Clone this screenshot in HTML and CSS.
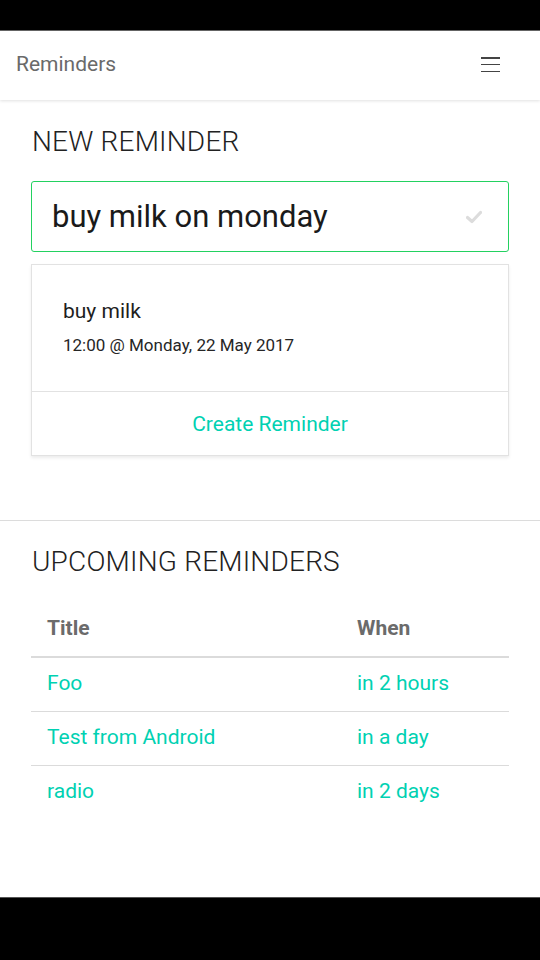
FILE: index.html
```html
<!DOCTYPE html>
<html>
<head>
<meta charset="utf-8">
<link rel="stylesheet" href="styles.css">
</head>
<body>
<div class="screen">
  <div class="statusbar"></div>
  <header class="navbar">
    <span class="brand">Reminders</span>
    <span class="burger"><i></i><i></i><i></i></span>
  </header>
  <main class="content">
    <section class="section new">
      <h2 class="heading">NEW REMINDER</h2>
      <div class="field">
        <span class="field-text">buy milk on monday</span>
        <svg class="check" width="16" height="14" viewBox="0 0 16 14"><path d="M1.5 7.5 L6 11.5 L14.5 2.5" fill="none" stroke="#dcdcdc" stroke-width="3.2" stroke-linejoin="round" stroke-linecap="round"/></svg>
      </div>
      <div class="card">
        <div class="card-body">
          <div class="card-title">buy milk</div>
          <div class="card-sub">12:00 @ Monday, 22 May 2017</div>
        </div>
        <div class="card-foot">Create Reminder</div>
      </div>
    </section>
    <hr class="rule">
    <section class="section upcoming">
      <h2 class="heading">UPCOMING REMINDERS</h2>
      <table class="table">
        <thead>
          <tr><th class="col-title">Title</th><th>When</th></tr>
        </thead>
        <tbody>
          <tr><td>Foo</td><td>in 2 hours</td></tr>
          <tr><td>Test from Android</td><td>in a day</td></tr>
          <tr><td>radio</td><td>in 2 days</td></tr>
        </tbody>
      </table>
    </section>
  </main>
  <div class="navbar-bottom"></div>
</div>
</body>
</html>
```
FILE: styles.css
```css
* { box-sizing: border-box; }
html, body { margin: 0; padding: 0; }
body {
  font-family: Roboto, "Noto Sans", Arial, sans-serif;
  background: #fff;
  color: #222;
}
.screen {
  width: 540px;
  height: 960px;
  display: flex;
  flex-direction: column;
  overflow: hidden;
}
.statusbar {
  height: 31px;
  background: #000;
  border-bottom: 1px solid #666;
  flex: none;
}
.navbar {
  height: 69px;
  flex: none;
  display: flex;
  align-items: center;
  justify-content: space-between;
  padding: 0 40px 3px 16px;
  box-shadow: 0 1px 3px rgba(0,0,0,0.12);
  position: relative;
  z-index: 1;
}
.brand {
  font-size: 21px;
  color: #6a6a6a;
  font-weight: 400;
}
.burger {
  width: 19px;
  height: 15px;
  margin-top: 1px;
  display: flex;
  flex-direction: column;
  justify-content: space-between;
}
.burger i {
  display: block;
  height: 1.5px;
  background: #444;
}
.content { flex: 1; }
.section { padding: 25px 31px 0 31px; }
.heading {
  margin: 0;
  font-size: 28px;
  line-height: 34px;
  font-weight: 300;
  letter-spacing: 0.2px;
  color: #222;
  padding-left: 1px;
}
.field {
  margin-top: 22px;
  height: 71px;
  border: 1px solid #23d160;
  border-radius: 3px;
  display: flex;
  align-items: center;
  justify-content: space-between;
  padding: 0 26px 0 20px;
}
.field-text {
  font-size: 31px;
  color: #1a1a1a;
}
.card {
  margin-top: 12px;
  border: 1px solid #e2e2e2;
  box-shadow: 0 2px 3px rgba(10,10,10,0.08);
}
.card-body {
  height: 126px;
  padding: 33px 31px 0 31px;
}
.card-title {
  font-size: 21px;
  line-height: 26px;
  color: #1e1e1e;
}
.card-sub {
  margin-top: 11px;
  font-size: 17px;
  line-height: 20px;
  color: #262626;
}
.card-foot {
  height: 64px;
  border-top: 1px solid #e2e2e2;
  display: flex;
  align-items: center;
  justify-content: center;
  font-size: 21px;
  color: #00d1b2;
}
.rule {
  margin: 64px 0 0 0;
  border: 0;
  height: 1px;
  background: #dcdcdc;
}
.upcoming { padding-top: 24px; }
.table {
  margin-top: 22px;
  width: 100%;
  border-collapse: collapse;
  font-size: 21px;
}
.table th, .table td {
  text-align: left;
  padding: 0 16px;
  height: 54px;
}
.table th {
  color: #6b6b6b;
  font-weight: 700;
  height: 56px;
  border-bottom: 2px solid #dbdbdb;
  padding-bottom: 2px;
}
.col-title { width: 310px; }
.table td {
  color: #00d1b2;
  border-bottom: 1px solid #dbdbdb;
  padding-bottom: 2px;
}
.table tbody tr:last-child td { border-bottom: 0; }
.navbar-bottom {
  height: 63px;
  flex: none;
  background: #000;
  border-top: 1px solid #555;
}
```
